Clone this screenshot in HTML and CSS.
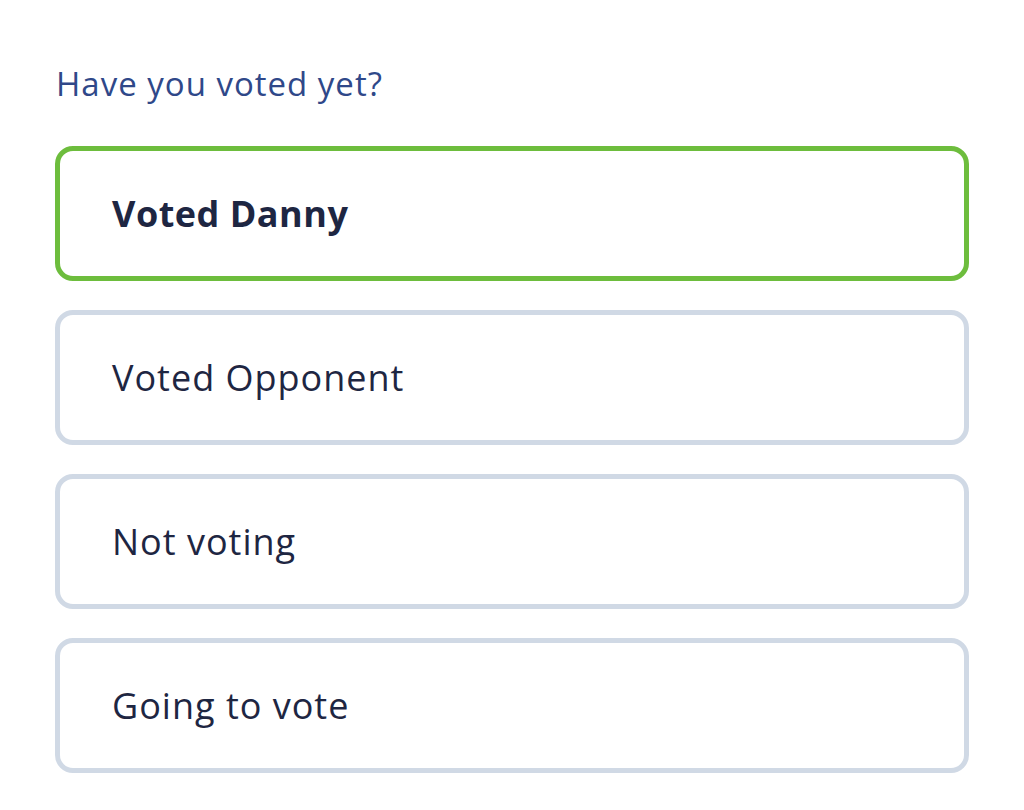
FILE: index.html
```html
<!DOCTYPE html>
<html lang="en">
<head>
  <meta charset="UTF-8" />
  <title>Have you voted yet?</title>
  <link rel="stylesheet" href="styles.css">
</head>
<body>
  <div class="poll">
    <h1 class="poll-title">Have you voted yet?</h1>
    <div class="options">
      <button class="option selected">Voted Danny</button>
      <button class="option">Voted Opponent</button>
      <button class="option">Not voting</button>
      <button class="option">Going to vote</button>
    </div>
  </div>
</body>
</html>
```

FILE: styles.css
```css
* {
  margin: 0;
  padding: 0;
  box-sizing: border-box;
  font-family: "Open Sans", Arial, sans-serif;
}
body {
  background-color: #ffffff;
}
.poll {
  padding: 64px 55px 0 55px;
}
.poll-title {
  font-size: 33px;
  font-weight: 400;
  letter-spacing: 1px;
  color: #2f4889;
  line-height: 40px;
  padding-left: 1px;
  margin-bottom: 42px;
}
.options {
  display: flex;
  flex-direction: column;
  gap: 29px;
}
.option {
  height: 135px;
  width: 100%;
  background: #ffffff;
  border: 5px solid #d0d9e5;
  border-radius: 18px;
  padding-left: 52px;
  text-align: left;
  font-size: 36px;
  font-weight: 400;
  letter-spacing: 1px;
  color: #1e2642;
  cursor: pointer;
}
.option.selected {
  border-color: #6dbd3d;
  font-weight: 700;
  letter-spacing: 0.5px;
}
```
